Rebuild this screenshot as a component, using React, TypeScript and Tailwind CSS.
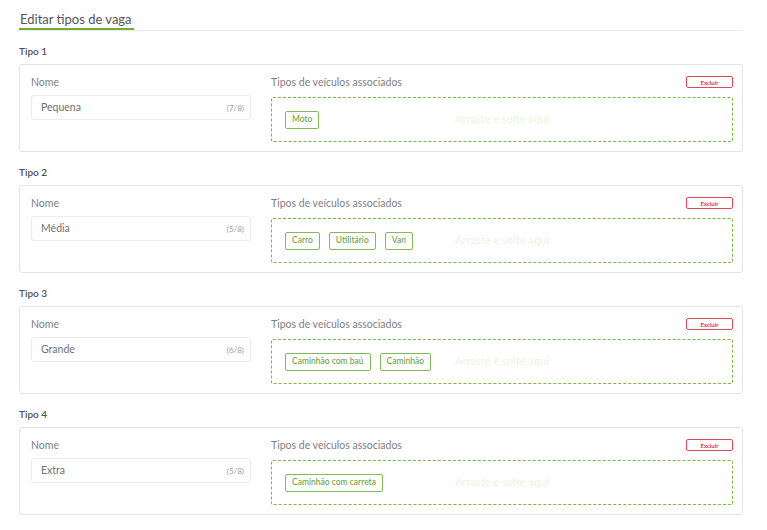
import React from "react";

interface VagaTipo {
  nome: string;
  max: number;
  veiculos: string[];
}

const tipos: VagaTipo[] = [
  { nome: "Pequena", max: 8, veiculos: ["Moto"] },
  { nome: "Média", max: 8, veiculos: ["Carro", "Utilitário", "Van"] },
  { nome: "Grande", max: 8, veiculos: ["Caminhão com baú", "Caminhão"] },
  { nome: "Extra", max: 8, veiculos: ["Caminhão com carreta"] },
];

function TipoCard({ tipo, index }: { tipo: VagaTipo; index: number }) {
  return (
    <section className="mt-[13px]">
      <h2 className="text-[10px] leading-[14px] font-semibold text-[#505050]">Tipo {index + 1}</h2>
      <div className="mt-[6px] flex h-[88px] gap-[20px] rounded-[3px] border border-[#e3e3e3] bg-white pt-[10px] pr-[9px] pl-[11px]">
        <div className="flex w-[220px] flex-col">
          <label className="text-[10.5px] leading-[14px] text-[#808080]">Nome</label>
          <div className="mt-[6px] flex h-[25px] items-center justify-between rounded-[3px] border border-[#ececec] pr-[6px] pl-[9px]">
            <span className="text-[10.5px] text-[#707070]">{tipo.nome}</span>
            <span className="text-[8px] text-[#a0a0a0]">
              ({tipo.nome.length}/{tipo.max})
            </span>
          </div>
        </div>
        <div className="flex flex-1 flex-col">
          <div className="flex h-[14px] items-center justify-between">
            <span className="text-[10.5px] leading-[14px] text-[#808080]">Tipos de veículos associados</span>
            <button className="flex h-[12px] w-[47px] items-center justify-center rounded-[2px] border border-[#e0485c] text-[6px] font-bold text-[#d9344a]">
              Excluir
            </button>
          </div>
          <div className="relative mt-[8px] flex h-[45px] items-center gap-[9px] rounded-[2px] border border-dashed border-[#7cb83f] px-[13px]">
            {tipo.veiculos.map((v) => (
              <span
                key={v}
                className="relative z-10 flex h-[18px] items-center rounded-[2px] border border-[#86ba58] bg-white px-[6px] text-[8.5px] font-medium text-[#6f9f45]"
              >
                {v}
              </span>
            ))}
            <span className="pointer-events-none absolute inset-0 flex items-center justify-center text-[11px] font-semibold text-[#eef5e6]">
              Arraste e solte aqui
            </span>
          </div>
        </div>
      </div>
    </section>
  );
}

export default function App() {
  return (
    <div className="min-h-screen bg-white pt-[10px] pr-[24px] pl-[19px]" style={{ fontFamily: "Lato, 'Noto Sans', sans-serif" }}>
      <div className="flex border-b border-[#ececec]">
        <h1 className="border-b-2 border-[#72ad2e] pr-[2px] pl-[1px] text-[13px] leading-[18px] text-[#555]">
          Editar tipos de vaga
        </h1>
      </div>
      {tipos.map((tipo, i) => (
        <TipoCard key={tipo.nome} tipo={tipo} index={i} />
      ))}
    </div>
  );
}
